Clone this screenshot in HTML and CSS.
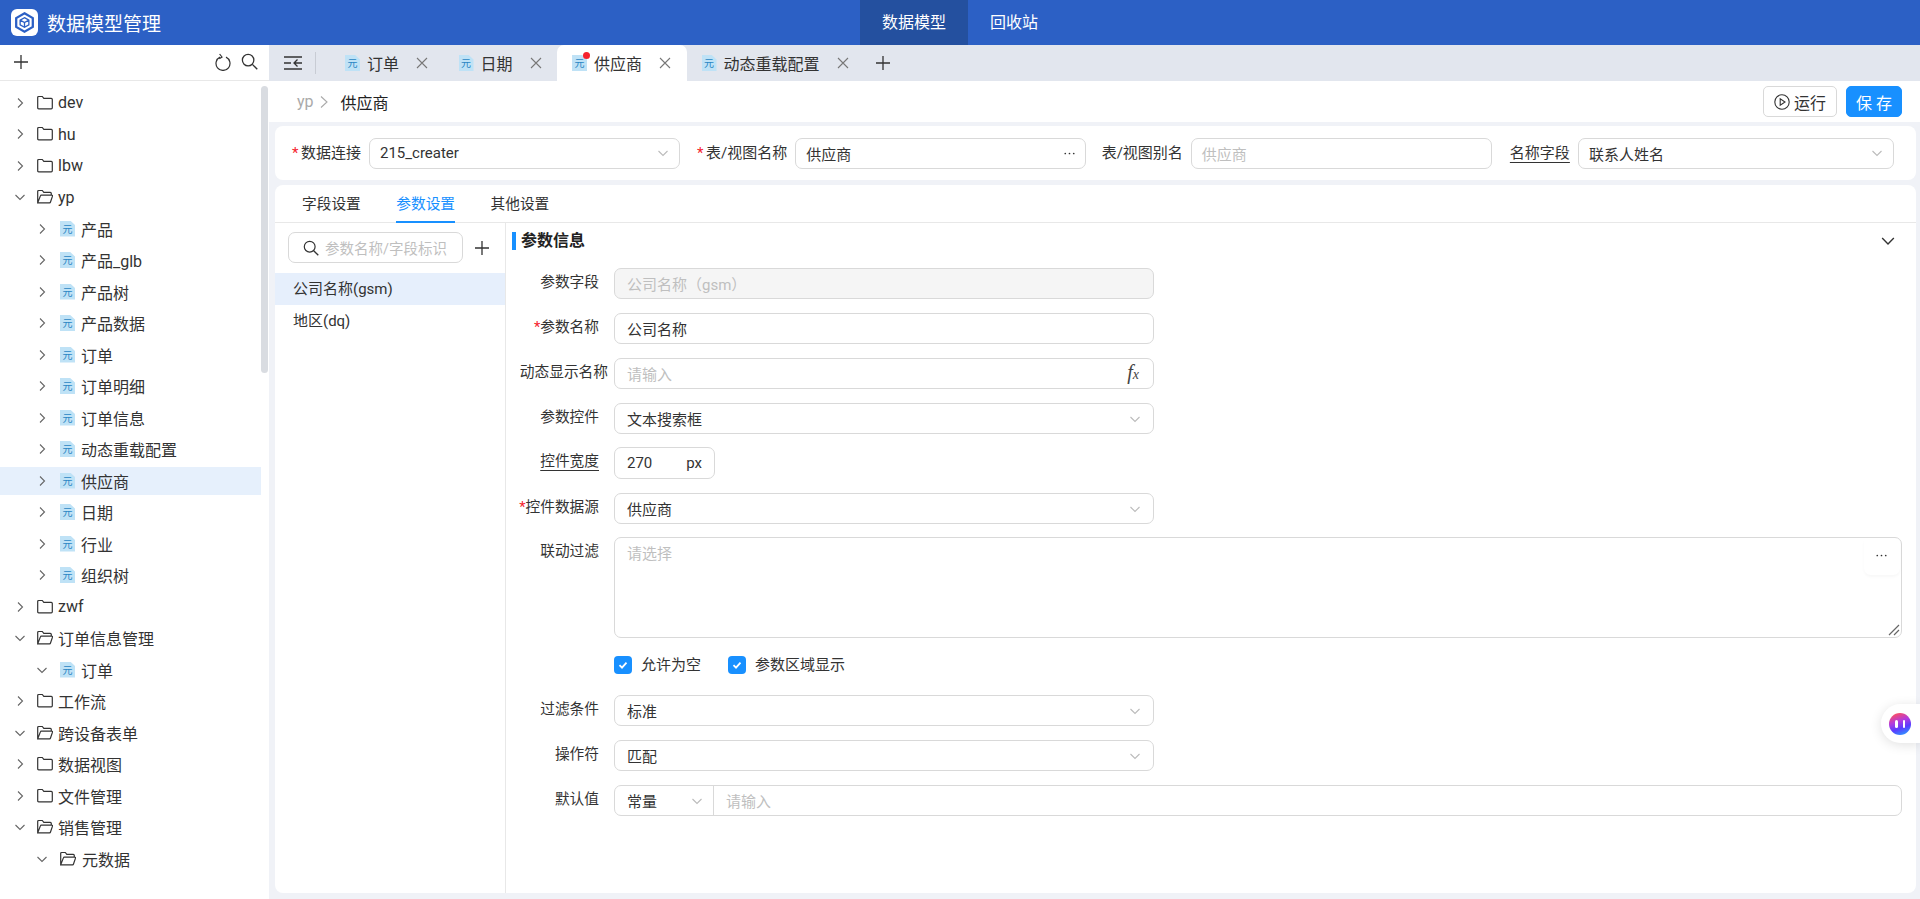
FILE: index.html
```html
<!DOCTYPE html>
<html lang="zh-CN">
<head>
  <meta charset="UTF-8" />
  <title>数据模型管理</title>
  <link rel="stylesheet" href="styles.css">
</head>
<body>

<svg class="sprite" xmlns="http://www.w3.org/2000/svg">
  <symbol id="i-right" viewBox="0 0 12 12"><path d="M4 1.500 8.500 6 4 10.500" fill="none" stroke="currentColor" stroke-width="1.100"/></symbol>
  <symbol id="i-down" viewBox="0 0 12 12"><path d="M1.500 4 6 8.500 10.500 4" fill="none" stroke="currentColor" stroke-width="1.100"/></symbol>
  <symbol id="i-folder" viewBox="0 0 16 16"><path d="M.7 2.500q0-1 1-1h3.600l1.500 1.900h7.500q1 0 1 1v8.400q0 1-1 1H1.700q-1 0-1-1z" fill="none" stroke="currentColor" stroke-width="1.200"/></symbol>
  <symbol id="i-open" viewBox="0 0 16 16"><path d="M.7 13.800V2.500q0-1 1-1h3.600l1.500 1.900h6.500q1 0 1 1v1.800M.7 13.800h11.800q.8 0 1-.8l2-5.800q.2-1-.8-1H4.400q-.8 0-1 .7z" fill="none" stroke="currentColor" stroke-width="1.200"/></symbol>
  <symbol id="i-plus" viewBox="0 0 14 14"><path d="M7 0v14M0 7h14" fill="none" stroke="currentColor" stroke-width="1.300"/></symbol>
  <symbol id="i-close" viewBox="0 0 12 12"><path d="M1 1 11 11M11 1 1 11" fill="none" stroke="currentColor" stroke-width="1.100"/></symbol>
  <symbol id="i-search" viewBox="0 0 16 16"><circle cx="6.700" cy="6.700" r="5.400" fill="none" stroke="currentColor" stroke-width="1.200"/><path d="m10.700 10.700 4.600 4.600" fill="none" stroke="currentColor" stroke-width="1.300"/></symbol>
  <symbol id="i-dots" viewBox="0 0 13 3"><circle cx="1.500" cy="1.500" r="1"/><circle cx="6.500" cy="1.500" r="1"/><circle cx="11.500" cy="1.500" r="1"/></symbol>
</svg>

<header class="topbar">
  <div class="brand">
    <span class="logo">
      <svg width="21" height="21" viewBox="0 0 24 24" fill="none" stroke="#2c60c5"><path d="M12 1.500 21.500 7v10L12 22.500 2.500 17V7z" stroke-width="2.600"/><path d="M12 6.500 17 9.300v5.400L12 17.500 7 14.700V9.300zM7 9.300l5 2.800 5-2.800M12 12.100v5.400" stroke-width="1.500"/></svg>
    </span>
    <span class="brand-title">数据模型管理</span>
  </div>
  <nav class="topnav">
    <a class="topnav-item active">数据模型</a>
    <a class="topnav-item">回收站</a>
  </nav>
</header>

<div class="layout">
  <aside class="sidebar">
    <div class="side-tools">
      <svg class="ic-plus" width="14" height="14"><use href="#i-plus"/></svg>
      <svg class="ic-refresh" width="16" height="18" viewBox="0 0 16 18" fill="none" stroke="currentColor" stroke-width="1.200"><path d="M5 4.100a7 7 0 1 0 6 0"/><path d="M4.600 1 7 4 4.300 5.800"/></svg>
      <svg class="ic-search" width="17" height="17"><use href="#i-search"/></svg>
    </div>
    <div class="side-scroll"></div>
    <ul class="tree">
      <li class="row"><svg class="chev"><use href="#i-right"/></svg><svg class="fold"><use href="#i-folder"/></svg><span>dev</span></li>
      <li class="row"><svg class="chev"><use href="#i-right"/></svg><svg class="fold"><use href="#i-folder"/></svg><span>hu</span></li>
      <li class="row"><svg class="chev"><use href="#i-right"/></svg><svg class="fold"><use href="#i-folder"/></svg><span>lbw</span></li>
      <li class="row"><svg class="chev"><use href="#i-down"/></svg><svg class="fold"><use href="#i-open"/></svg><span>yp</span></li>
      <li class="row sub"><svg class="chev"><use href="#i-right"/></svg><i class="meta">元</i><span>产品</span></li>
      <li class="row sub"><svg class="chev"><use href="#i-right"/></svg><i class="meta">元</i><span>产品_glb</span></li>
      <li class="row sub"><svg class="chev"><use href="#i-right"/></svg><i class="meta">元</i><span>产品树</span></li>
      <li class="row sub"><svg class="chev"><use href="#i-right"/></svg><i class="meta">元</i><span>产品数据</span></li>
      <li class="row sub"><svg class="chev"><use href="#i-right"/></svg><i class="meta">元</i><span>订单</span></li>
      <li class="row sub"><svg class="chev"><use href="#i-right"/></svg><i class="meta">元</i><span>订单明细</span></li>
      <li class="row sub"><svg class="chev"><use href="#i-right"/></svg><i class="meta">元</i><span>订单信息</span></li>
      <li class="row sub"><svg class="chev"><use href="#i-right"/></svg><i class="meta">元</i><span>动态重载配置</span></li>
      <li class="row sub selected"><svg class="chev"><use href="#i-right"/></svg><i class="meta">元</i><span>供应商</span></li>
      <li class="row sub"><svg class="chev"><use href="#i-right"/></svg><i class="meta">元</i><span>日期</span></li>
      <li class="row sub"><svg class="chev"><use href="#i-right"/></svg><i class="meta">元</i><span>行业</span></li>
      <li class="row sub"><svg class="chev"><use href="#i-right"/></svg><i class="meta">元</i><span>组织树</span></li>
      <li class="row"><svg class="chev"><use href="#i-right"/></svg><svg class="fold"><use href="#i-folder"/></svg><span>zwf</span></li>
      <li class="row"><svg class="chev"><use href="#i-down"/></svg><svg class="fold"><use href="#i-open"/></svg><span>订单信息管理</span></li>
      <li class="row sub"><svg class="chev"><use href="#i-down"/></svg><i class="meta">元</i><span>订单</span></li>
      <li class="row"><svg class="chev"><use href="#i-right"/></svg><svg class="fold"><use href="#i-folder"/></svg><span>工作流</span></li>
      <li class="row"><svg class="chev"><use href="#i-down"/></svg><svg class="fold"><use href="#i-open"/></svg><span>跨设备表单</span></li>
      <li class="row"><svg class="chev"><use href="#i-right"/></svg><svg class="fold"><use href="#i-folder"/></svg><span>数据视图</span></li>
      <li class="row"><svg class="chev"><use href="#i-right"/></svg><svg class="fold"><use href="#i-folder"/></svg><span>文件管理</span></li>
      <li class="row"><svg class="chev"><use href="#i-down"/></svg><svg class="fold"><use href="#i-open"/></svg><span>销售管理</span></li>
      <li class="row sub"><svg class="chev"><use href="#i-down"/></svg><svg class="fold"><use href="#i-open"/></svg><span>元数据</span></li>
    </ul>
  </aside>

  <main class="main">
    <div class="tabbar">
      <svg class="collapse" width="18" height="14" viewBox="0 0 18 14" fill="none" stroke="currentColor" stroke-width="1.300"><path d="M0 1h18M0 13h18M0 7h7M18 7H10M13.500 3.500 10 7l3.500 3.500"/></svg>
      <span class="tab-sep"></span>
      <div class="tab"><i class="meta">元</i><span>订单</span><svg class="tab-x"><use href="#i-close"/></svg></div>
      <div class="tab"><i class="meta">元</i><span>日期</span><svg class="tab-x"><use href="#i-close"/></svg></div>
      <div class="tab active"><i class="meta">元</i><b class="dot"></b><span>供应商</span><svg class="tab-x"><use href="#i-close"/></svg></div>
      <div class="tab"><i class="meta">元</i><span>动态重载配置</span><svg class="tab-x"><use href="#i-close"/></svg></div>
      <svg class="tab-add" width="14" height="14"><use href="#i-plus"/></svg>
    </div>

    <div class="crumbs">
      <span class="crumb-root">yp</span>
      <svg class="crumb-sep" width="12" height="14" viewBox="0 0 12 14"><path d="M3 1.500 9 7l-6 5.500" fill="none" stroke="currentColor" stroke-width="1.100"/></svg>
      <span class="crumb-now">供应商</span>
      <div class="crumb-actions">
        <button class="btn">
          <svg width="16" height="16" viewBox="0 0 16 16" fill="none" stroke="currentColor" stroke-width="1.100"><circle cx="8" cy="8" r="7.200"/><path d="M6.200 4.800v6.400L11 8z"/></svg>
          运行
        </button>
        <button class="btn primary">保 存</button>
      </div>
    </div>

    <section class="card conn">
      <label class="lab"><em>*</em>数据连接</label>
      <div class="field w-conn">215_creater<svg class="arrow"><use href="#i-down"/></svg></div>
      <label class="lab"><em>*</em>表/视图名称</label>
      <div class="field w-table">供应商<svg class="dots"><use href="#i-dots"/></svg></div>
      <label class="lab">表/视图别名</label>
      <div class="field w-alias ph">供应商</div>
      <label class="lab tip">名称字段</label>
      <div class="field w-name">联系人姓名<svg class="arrow"><use href="#i-down"/></svg></div>
    </section>

    <section class="card editor">
      <div class="subtabs">
        <a class="subtab">字段设置</a>
        <a class="subtab active">参数设置</a>
        <a class="subtab">其他设置</a>
      </div>
      <div class="editor-body">
        <div class="params">
          <div class="param-tools">
            <div class="param-search">
              <svg width="16" height="16"><use href="#i-search"/></svg>
              <span>参数名称/字段标识</span>
            </div>
            <svg class="param-add" width="14" height="14"><use href="#i-plus"/></svg>
          </div>
          <div class="param-item active">公司名称(gsm)</div>
          <div class="param-item">地区(dq)</div>
        </div>

        <div class="detail">
          <div class="detail-head">
            <h3>参数信息</h3>
            <svg class="detail-fold" width="14" height="14" viewBox="0 0 12 12"><path d="M1 3.500 6 8.500l5-5" fill="none" stroke="currentColor" stroke-width="1.200"/></svg>
          </div>

          <div class="frow">
            <label class="flab">参数字段</label>
            <div class="field w-md off">公司名称（gsm）</div>
          </div>
          <div class="frow">
            <label class="flab"><em>*</em>参数名称</label>
            <div class="field w-md">公司名称</div>
          </div>
          <div class="frow">
            <label class="flab wide">动态显示名称</label>
            <div class="field w-md ph">请输入<span class="fx">f<small>x</small></span></div>
          </div>
          <div class="frow tight">
            <label class="flab">参数控件</label>
            <div class="field w-md">文本搜索框<svg class="arrow"><use href="#i-down"/></svg></div>
          </div>
          <div class="frow">
            <label class="flab"><u>控件宽度</u></label>
            <div class="field w-px">270<span class="unit">px</span></div>
          </div>
          <div class="frow tight">
            <label class="flab"><em>*</em>控件数据源</label>
            <div class="field w-md">供应商<svg class="arrow"><use href="#i-down"/></svg></div>
          </div>
          <div class="frow">
            <label class="flab">联动过滤</label>
            <div class="area ph">
              请选择
              <span class="area-more"><svg class="dots"><use href="#i-dots"/></svg></span>
              <svg class="grip" width="12" height="12" viewBox="0 0 12 12" stroke="#666" stroke-width="1.200"><path d="M1 11 11 1M6 11l5-5"/></svg>
            </div>
          </div>
          <div class="frow checks">
            <span></span>
            <div class="check-line">
              <label class="check"><i class="box"><svg width="12" height="12" viewBox="0 0 12 12"><path d="M2.500 6.200 5 8.700l4.500-5" fill="none" stroke="#fff" stroke-width="1.800"/></svg></i>允许为空</label>
              <label class="check"><i class="box"><svg width="12" height="12" viewBox="0 0 12 12"><path d="M2.500 6.200 5 8.700l4.500-5" fill="none" stroke="#fff" stroke-width="1.800"/></svg></i>参数区域显示</label>
            </div>
          </div>
          <div class="frow">
            <label class="flab">过滤条件</label>
            <div class="field w-md">标准<svg class="arrow"><use href="#i-down"/></svg></div>
          </div>
          <div class="frow">
            <label class="flab">操作符</label>
            <div class="field w-md">匹配<svg class="arrow"><use href="#i-down"/></svg></div>
          </div>
          <div class="frow">
            <label class="flab">默认值</label>
            <div class="field combo">
              <div class="combo-type">常量<svg class="arrow"><use href="#i-down"/></svg></div>
              <div class="combo-val ph">请输入</div>
            </div>
          </div>
        </div>
      </div>
    </section>
  </main>
</div>

<div class="assistant"><span class="bot"><i></i><i></i></span></div>

</body>
</html>
```

FILE: styles.css
```css
* {
  box-sizing: border-box;
}

html, body {
  height: 100%;
}

body {
  margin: 0;
  overflow: hidden;
  font-family: Roboto, "Noto Sans CJK SC", sans-serif;
  font-size: 15px;
  color: #333;
  background-color: #f0f2f7;
  text-spacing-trim: space-all;
}

.sprite {
  display: none;
}

em {
  font-style: normal;
  color: #f5222d;
}

/* top bar */
.topbar {
  display: flex;
  height: 45px;
  background-color: #2c60c5;
  color: #fff;
}

.brand {
  display: flex;
  align-items: center;
  width: 860px;
  padding-left: 11px;
}

.logo {
  display: flex;
  justify-content: center;
  align-items: center;
  width: 27px;
  height: 27px;
  margin-right: 9px;
  background-color: #fff;
  border-radius: 6px;
}

.brand-title {
  font-size: 19px;
}

.topnav {
  display: flex;
}

.topnav-item {
  padding: 0 22px;
  font-size: 16px;
  line-height: 45px;
}

.topnav-item.active {
  background-color: #24509f;
}

/* left tree */
.layout {
  display: flex;
  height: 854px;
}

.sidebar {
  position: relative;
  flex: none;
  width: 269px;
  background-color: #fff;
}

.side-tools {
  display: flex;
  align-items: center;
  height: 36px;
  padding: 0 0 2px 14px;
  color: #333;
  border-bottom: 1px solid #e8e8e8;
}

.ic-plus {
  margin-right: 187px;
}

.ic-refresh {
  margin-right: 10px;
}

.side-scroll {
  position: absolute;
  top: 41px;
  right: 1px;
  width: 7px;
  height: 287px;
  background-color: #d9dce1;
  border-radius: 4px;
}

.tree {
  list-style: none;
  margin: 0;
  padding: 7.500px 8px 0 0;
}

.row {
  display: flex;
  align-items: center;
  height: 28px;
  margin-bottom: 3.500px;
  padding-left: 14px;
  font-size: 16px;
  white-space: nowrap;
}

.row.sub {
  padding-left: 36px;
}

.row.selected {
  background-color: #e6f0fc;
}

.chev {
  flex: none;
  width: 12px;
  height: 12px;
  color: #666;
}

.fold {
  flex: none;
  width: 16px;
  height: 16px;
  margin: 0 5px 0 11px;
  color: #333;
}

.row.sub .fold {
  margin: 0 6px 0 12px;
}

.meta {
  position: relative;
  flex: none;
  display: block;
  width: 15px;
  height: 16px;
  font-style: normal;
  font-size: 10px;
  line-height: 18px;
  text-align: center;
  color: #2a86c4;
  background-color: #bfe2f6;
  clip-path: polygon(0 0, 68% 0, 100% 28%, 100% 100%, 0 100%);
}

.row .meta {
  margin: 0 6px 0 12px;
}

/* right side */
.main {
  flex: 1;
  min-width: 0;
}

.tabbar {
  display: flex;
  align-items: center;
  height: 36px;
  background-color: #e2e6ee;
}

.collapse {
  flex: none;
  margin-left: 15px;
  color: #333;
}

.tab-sep {
  width: 1px;
  height: 22px;
  margin: 0 14px 0 13px;
  background-color: #c8ccd4;
}

.tab {
  position: relative;
  display: flex;
  align-items: center;
  height: 36px;
  padding: 0 15.500px 0 15px;
  font-size: 16px;
  border-radius: 7px 7px 0 0;
}

.tab .meta {
  margin-right: 7px;
}

.tab.active {
  background-color: #fff;
}

.dot {
  position: absolute;
  top: 7px;
  left: 26px;
  width: 7px;
  height: 7px;
  background-color: #f5222d;
  border-radius: 50%;
}

.tab-x {
  width: 12px;
  height: 12px;
  margin-left: 17px;
  color: #777;
}

.tab-add {
  margin-left: 12px;
  color: #333;
}

.crumbs {
  display: flex;
  align-items: center;
  height: 41px;
  padding: 0 18px 0 28px;
  background-color: #fff;
}

.crumb-root {
  font-size: 16px;
  color: #aaa;
}

.crumb-sep {
  margin: 0 11px 0 4px;
  color: #aaa;
}

.crumb-now {
  font-size: 16px;
  color: #222;
}

.crumb-actions {
  display: flex;
  gap: 9px;
  margin-left: auto;
}

.btn {
  display: flex;
  align-items: center;
  gap: 4px;
  height: 31px;
  padding: 0 10px;
  font: inherit;
  font-size: 16px;
  color: #333;
  background-color: #fff;
  border: 1px solid #d9d9d9;
  border-radius: 5px;
}

.btn.primary {
  padding: 0 9px;
  color: #fff;
  background-color: #1890ff;
  border-color: #1890ff;
}

.card {
  margin: 0 4px 5px 6px;
  background-color: #fff;
  border-radius: 8px;
}

.conn {
  display: flex;
  align-items: center;
  height: 54px;
  margin-top: 4px;
  padding-left: 17px;
}

.lab {
  flex: none;
  margin: 0 8px 4px 0;
  white-space: nowrap;
}

.lab em {
  margin-right: 2.500px;
}

.tip {
  margin-left: 1px;
  text-decoration: underline;
  text-underline-offset: 4px;
}

.field {
  position: relative;
  display: flex;
  align-items: center;
  flex: none;
  height: 31px;
  padding: 0 12px;
  background-color: #fff;
  border: 1px solid #d9d9d9;
  border-radius: 7px;
  white-space: nowrap;
}

.conn .field {
  padding: 0 10px;
  margin-right: 17px;
}

.conn .w-table {
  margin-right: 15.500px;
}

.w-conn { width: 311px; }
.w-table { width: 291px; }
.w-alias { width: 301px; }
.w-name { width: 316px; }
.w-md { width: 540px; }
.w-px { width: 101px; height: 32px; }

.ph {
  color: #bfbfbf;
}

.off {
  color: #bfbfbf;
  background-color: #f5f5f5;
}

.arrow {
  width: 12px;
  height: 12px;
  margin-left: auto;
  color: #bbb;
}

.dots {
  width: 11px;
  height: 3px;
  margin-left: auto;
  fill: #333;
}

.editor {
  height: 708px;
  margin-bottom: 0;
}

.subtabs {
  display: flex;
  height: 38px;
  padding-left: 27px;
  font-size: 14.700px;
  border-bottom: 1px solid #e8e8e8;
}

.subtab {
  height: 38px;
  margin-right: 35.500px;
  line-height: 38px;
}

.subtab.active {
  color: #1890ff;
  border-bottom: 2px solid #1890ff;
}

.editor-body {
  display: flex;
  height: 670px;
}

.params {
  flex: none;
  width: 231px;
  border-right: 1px solid #e8e8e8;
}

.param-tools {
  display: flex;
  align-items: center;
  padding: 9px 0 10px 13px;
}

.param-search {
  display: flex;
  align-items: center;
  gap: 6px;
  width: 175px;
  height: 31px;
  padding-left: 14px;
  color: #333;
  border: 1px solid #d9d9d9;
  border-radius: 7px;
}

.param-search span {
  font-size: 14.500px;
  color: #bfbfbf;
  white-space: nowrap;
}

.param-add {
  margin-left: 12px;
}

.param-item {
  height: 32px;
  padding-left: 18px;
  line-height: 33px;
}

.param-item.active {
  background-color: #e6effc;
}

.detail {
  flex: 1;
  min-width: 0;
  padding: 9px 14px 0 6px;
}

.detail-head {
  display: flex;
  align-items: center;
  height: 18px;
  margin-bottom: 18px;
  border-left: 4px solid #1890ff;
}

.detail-head h3 {
  margin: -4px 0 0 5px;
  font-size: 16px;
  font-weight: 700;
  color: #222;
}

.detail-fold {
  margin: 0 7px 0 auto;
  color: #333;
}

.frow {
  display: grid;
  grid-template-columns: 87px 1fr;
  column-gap: 15px;
  margin-bottom: 14px;
}

.frow.tight {
  margin-bottom: 13px;
}

.frow.checks {
  height: 18px;
  margin: 18px 0 21px;
}

.flab {
  font-size: 14.700px;
  line-height: 29px;
  text-align: right;
  white-space: nowrap;
}

.flab.wide {
  margin-right: -9px;
  margin-left: -9px;
}

.flab u {
  text-underline-offset: 4px;
}

.unit {
  margin-left: auto;
}

.fx {
  margin-left: auto;
  margin-right: 2px;
  font-family: "Liberation Serif", serif;
  font-style: italic;
  font-size: 20px;
  line-height: 20px;
  color: #444;
}

.fx small {
  font-size: 14px;
}

.area {
  position: relative;
  height: 101px;
  padding: 4px 12px;
  background-color: #fff;
  border: 1px solid #d9d9d9;
  border-radius: 7px;
}

.area-more {
  position: absolute;
  top: 2px;
  right: 1px;
  display: flex;
  justify-content: center;
  align-items: center;
  width: 36px;
  height: 35px;
  padding-right: 2px;
  padding-bottom: 4px;
  border-radius: 0 0 7px 7px;
  box-shadow: 0 2px 3px rgba(0, 0, 0, 0.03);
}

.area-more .dots {
  margin: 0;
}

.grip {
  position: absolute;
  right: 1px;
  bottom: 1px;
}

.check-line {
  display: flex;
  gap: 27px;
  line-height: 18px;
}

.check {
  display: flex;
  align-items: center;
  gap: 9px;
}

.box {
  display: flex;
  justify-content: center;
  align-items: center;
  width: 18px;
  height: 18px;
  background-color: #1890ff;
  border-radius: 4px;
}

.combo {
  width: 100%;
  padding: 0;
}

.combo-type {
  display: flex;
  align-items: center;
  width: 99px;
  height: 100%;
  padding: 0 10px 0 12px;
  border-right: 1px solid #d9d9d9;
}

.combo-val {
  padding-left: 12px;
}

/* floating helper */
.assistant {
  position: fixed;
  top: 704px;
  right: 0;
  display: flex;
  align-items: center;
  width: 39px;
  height: 39px;
  padding-left: 8px;
  background-color: #fff;
  border-radius: 20px 0 0 20px;
  box-shadow: 0 2px 12px rgba(0, 0, 0, 0.12);
}

.bot {
  display: flex;
  justify-content: center;
  align-items: center;
  gap: 5px;
  width: 22px;
  height: 22px;
  background: linear-gradient(160deg, #ff4f5e 8%, #b13be0 40%, #5a3cff 65%, #2aa0ff 95%);
  border-radius: 50%;
}

.bot i {
  width: 2.500px;
  height: 8px;
  background-color: #fff;
  border-radius: 2px;
}
```
